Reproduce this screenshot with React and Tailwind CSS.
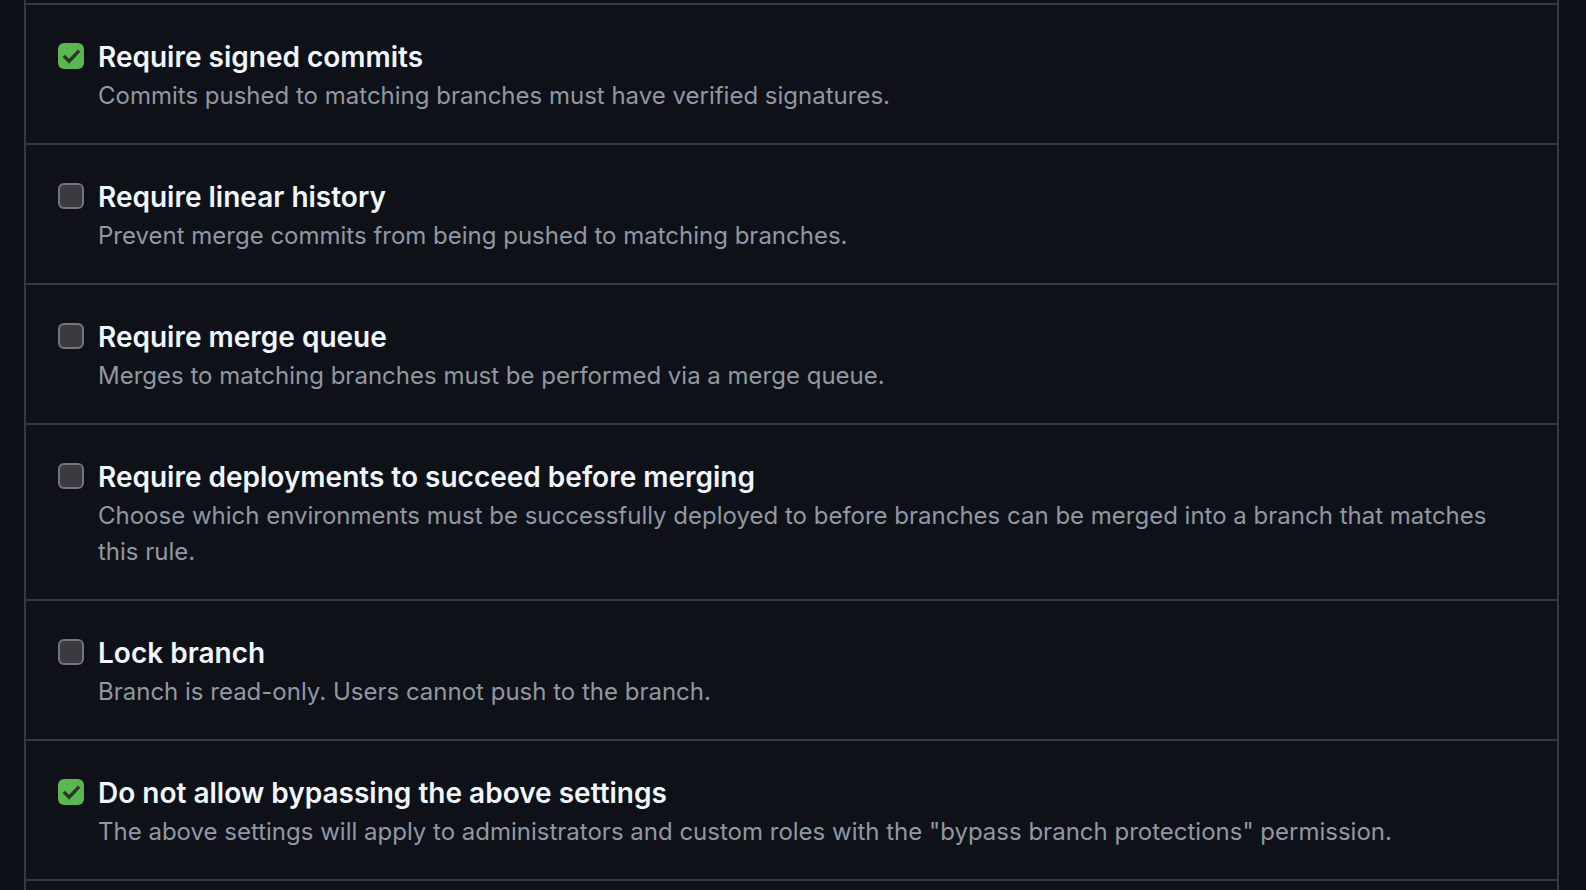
import { useState } from "react";

const rules = [
  {
    title: "Require signed commits",
    desc: "Commits pushed to matching branches must have verified signatures.",
    checked: true,
  },
  {
    title: "Require linear history",
    desc: "Prevent merge commits from being pushed to matching branches.",
    checked: false,
  },
  {
    title: "Require merge queue",
    desc: "Merges to matching branches must be performed via a merge queue.",
    checked: false,
  },
  {
    title: "Require deployments to succeed before merging",
    desc: "Choose which environments must be successfully deployed to before branches can be merged into a branch that matches this rule.",
    checked: false,
    long: true,
  },
  {
    title: "Lock branch",
    desc: "Branch is read-only. Users cannot push to the branch.",
    checked: false,
  },
  {
    title: "Do not allow bypassing the above settings",
    desc: 'The above settings will apply to administrators and custom roles with the "bypass branch protections" permission.',
    checked: true,
  },
];

function Checkbox({ checked, onChange }) {
  return (
    <button
      onClick={onChange}
      className={`mt-[6px] w-[26px] h-[26px] shrink-0 rounded-[6px] flex items-center justify-center ${
        checked ? "bg-[#5bb64f]" : "bg-[#3a3a40] border-2 border-[#74747a]"
      }`}
    >
      {checked && (
        <svg width="19" height="19" viewBox="0 0 16 16" fill="none">
          <path d="M2.5 8.5l3.5 3.5 7.5-8" stroke="#2d352b" strokeWidth="2.8" strokeLinecap="square" />
        </svg>
      )}
    </button>
  );
}

export default function App() {
  const [state, setState] = useState(rules.map((r) => r.checked));

  return (
    <div className="w-[1586px] h-[890px] overflow-hidden bg-[#0d1117]" style={{ fontFamily: "Inter, 'Noto Sans', sans-serif" }}>
      <div className="ml-[24px] w-[1535px] bg-[#0e1118] border-x-2 border-[#353a42]">
        <div className="h-[3px]" />
        {rules.map((r, i) => (
          <div key={r.title} className="border-t-2 border-[#353a42] pl-[32px] pr-[44px] pt-[32px] pb-[30px] flex items-start gap-[15px]">
            <Checkbox
              checked={state[i]}
              onChange={() => setState((s) => s.map((v, j) => (j === i ? !v : v)))}
            />
            <div className="flex flex-col -ml-px">
              <div className="text-[28px] leading-[40px] font-semibold text-[#f0f6fc]">{r.title}</div>
              <div className={`mt-px text-[24px] text-[#9198a1] ${r.long ? "leading-[35.5px]" : "leading-[35px]"}`}>
                {r.desc}
              </div>
            </div>
          </div>
        ))}
        <div className="border-t-2 border-[#353a42] h-[40px]" />
      </div>
    </div>
  );
}
